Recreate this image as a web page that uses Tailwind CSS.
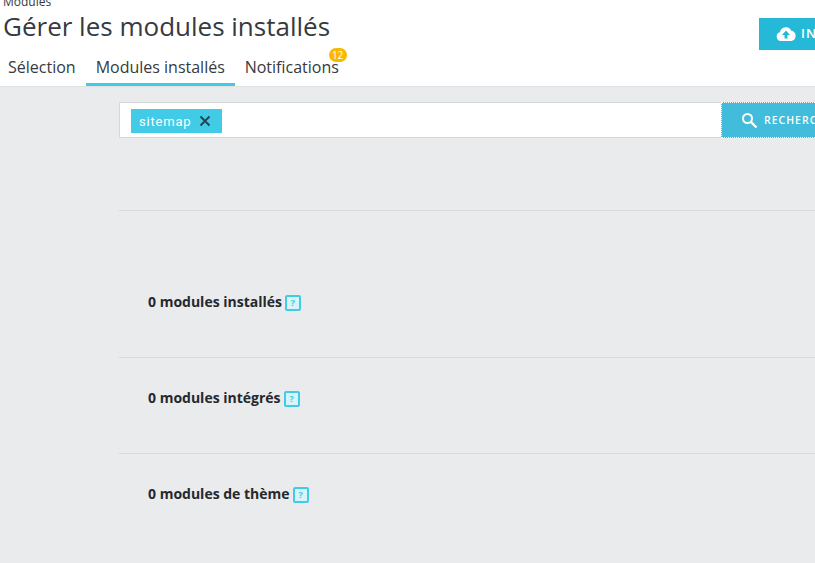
<!DOCTYPE html>
<html lang="fr">
<head>
<meta charset="utf-8">
<script src="https://cdn.jsdelivr.net/npm/@tailwindcss/browser@4"></script>
</head>
<body class="w-[815px] h-[563px] overflow-hidden bg-[#eaebec] font-['Open_Sans',sans-serif] text-[#363a41]">
<header class="bg-white h-[87px] border-b border-[#dfe1e3] relative">
  <div class="h-[9px] pl-[3px] text-[12px] leading-[4px] text-[#363a41] overflow-hidden"><span class="block">Modules</span></div>
  <h1 class="pl-[3px] text-[26px] leading-[32px] h-[32px] font-normal mt-[1px] text-[#363a41] whitespace-nowrap">Gérer les modules installés</h1>
  <nav class="flex mt-[9px] h-[35px]">
    <a class="h-[35px] pl-[8px] pr-[10px] text-[16px] leading-[33px] whitespace-nowrap">Sélection</a>
    <a class="h-[35px] pl-[10px] text-[16px] leading-[33px] border-b-[3px] border-[#41cbe6] w-[149px] whitespace-nowrap">Modules installés</a>
    <a class="h-[35px] px-[10px] text-[16px] leading-[33px] relative whitespace-nowrap">Notifications
      <span class="absolute left-[94px] -top-[3px] w-[18px] h-[14px] rounded-full bg-[#fbb800] text-white text-[10px] leading-[14px] text-center">12</span>
    </a>
  </nav>
  <a class="absolute left-[759px] top-[18px] w-[120px] h-[32px] bg-[#25b9d7] text-white flex items-center pl-[17px] gap-[5px] text-[13px] font-semibold tracking-[1px]">
    <svg width="20" height="14" viewBox="0 0 20 14"><path fill="#fff" d="M5 14a4.600 4.600 0 0 1-1-9 6 6 0 0 1 11.300-1.200A5.200 5.200 0 0 1 15.500 14z"/><path fill="#25b9d7" d="M10 3.500l4 4.500h-2.500v3.500h-3V8H6z"/></svg>
    <span>INSTALLER</span>
  </a>
</header>
<main class="pl-[119px]">
  <div class="mt-[15px] h-[36px] w-[753px] flex bg-white border border-[#d3d8db]">
    <div class="flex-1 pl-[11px] pt-[6px]">
      <span class="inline-flex items-center h-[24px] w-[91px] align-top bg-[#41cbe6] pl-[8px] gap-[8px] text-white font-['Roboto',sans-serif] text-[13px] tracking-[0.8px]"><span class="mt-[2px]">sitemap</span>
        <svg width="12" height="12" viewBox="0 0 12 12"><path d="M1.500 1.500l9 9M10.500 1.500l-9 9" stroke="#25434f" stroke-width="1.800" fill="none"/></svg>
      </span>
    </div>
    <div class="w-[150px] -my-px h-[36px] bg-[#41bcdb] border border-dotted border-white flex items-center pl-[19px] gap-[6px] text-white text-[10.500px] font-semibold tracking-[1px] shrink-0 whitespace-nowrap">
      <svg width="17" height="17" viewBox="0 0 17 17"><circle cx="6.500" cy="6.500" r="4.500" stroke="#fff" stroke-width="2" fill="none"/><path d="M10 10l5.500 5.500" stroke="#fff" stroke-width="2.400" fill="none"/></svg>
      <span class="mt-[1px]">RECHERCHER</span>
    </div>
  </div>
  <hr class="mt-[72px] border-[#d6d9dc] w-[700px]">
  <section class="h-[147px] border-b border-[#d6d9dc] w-[700px] pt-[81px] pl-[29px] flex items-start gap-[3px]">
    <h2 class="text-[14px] leading-[19px] font-bold text-[#25282c]">0 modules installés</h2>
    <span class="mt-[3px] w-[16px] h-[16px] border-2 border-[#41cbe6] bg-[#d6f4fa] rounded-[2px] text-[#41cbe6] text-[9px] leading-[12px] font-bold text-center">?</span>
  </section>
  <section class="h-[96px] border-b border-[#d6d9dc] w-[700px] pt-[30px] pl-[29px] flex items-start gap-[3px]">
    <h2 class="text-[14px] leading-[19px] font-bold text-[#25282c]">0 modules intégrés</h2>
    <span class="mt-[3px] w-[16px] h-[16px] border-2 border-[#41cbe6] bg-[#d6f4fa] rounded-[2px] text-[#41cbe6] text-[9px] leading-[12px] font-bold text-center">?</span>
  </section>
  <section class="w-[700px] pt-[30px] pl-[29px] flex items-start gap-[3px]">
    <h2 class="text-[14px] leading-[19px] font-bold text-[#25282c]">0 modules de thème</h2>
    <span class="mt-[3px] w-[16px] h-[16px] border-2 border-[#41cbe6] bg-[#d6f4fa] rounded-[2px] text-[#41cbe6] text-[9px] leading-[12px] font-bold text-center">?</span>
  </section>
</main>
</body>
</html>
